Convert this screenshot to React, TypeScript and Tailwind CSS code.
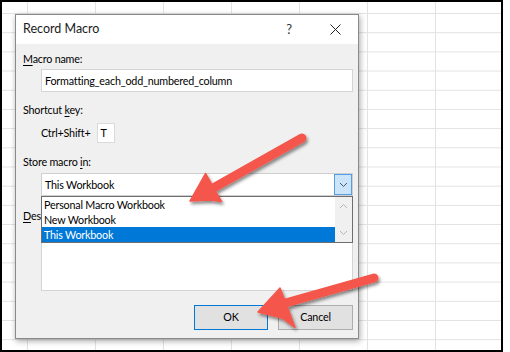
import React from "react";

const font = { fontFamily: 'Lato, "Noto Sans", "Liberation Sans", sans-serif' };

function Chevron({ up = false, color = "#4a5a70" }: { up?: boolean; color?: string }) {
  return (
    <svg width="9" height="6" viewBox="0 0 9 6">
      <path
        d={up ? "M1 5 L4.5 1.5 L8 5" : "M1 1 L4.5 4.5 L8 1"}
        fill="none"
        stroke={color}
        strokeWidth="1"
      />
    </svg>
  );
}

function Arrows() {
  return (
    <svg className="absolute left-0 top-0 z-20 pointer-events-none" width="510" height="352" viewBox="0 0 510 352">
      <defs>
        <filter id="sh" x="-20%" y="-20%" width="140%" height="140%">
          <feDropShadow dx="1.5" dy="2.5" stdDeviation="1.6" floodColor="#000" floodOpacity="0.45" />
        </filter>
      </defs>
      <g filter="url(#sh)">
        <line x1="302" y1="138" x2="208" y2="191" stroke="#f4574b" strokeWidth="9" strokeLinecap="round" />
        <path d="M190 201 L205.5 173.5 L211 183 L214 188.5 L221.5 201.5 L210 200 Z" fill="#f4574b" stroke="#f4574b" strokeWidth="1.5" strokeLinejoin="round" />
        <line x1="374" y1="278" x2="282" y2="304" stroke="#f4574b" strokeWidth="9" strokeLinecap="round" />
        <path d="M258 312 L280 288 L284 298 L287 306 L295 327.5 L282 318 Z" fill="#f4574b" stroke="#f4574b" strokeWidth="1.5" strokeLinejoin="round" />
      </g>
    </svg>
  );
}

export default function App() {
  return (
    <div className="relative w-[510px] h-[352px] bg-white overflow-hidden text-[10.75px] tracking-[-0.2px] text-black" style={font}>
      <div className="w-[503px] h-[352px] border-2 border-black bg-white bg-[linear-gradient(to_right,#e2e2e2_1px,transparent_1px),linear-gradient(to_bottom,#e2e2e2_1px,transparent_1px)] bg-[size:68px_19.2px] bg-[position:25px_11px]" />

      {/* Dialog window */}
      <div className="absolute left-[15px] top-[14px] w-[344px] h-[325px] border border-[#8a8a8a] shadow-[1px_2px_6px_rgba(0,0,0,0.35)] flex flex-col">
        <div className="h-[29px] bg-white flex items-center pl-[7px] text-[12.5px] tracking-normal text-[#1a1a1a]">
          <span>Record Macro</span>
          <span className="ml-auto mr-[38px] text-[13px] text-[#333]">?</span>
          <svg width="11" height="11" viewBox="0 0 11 11" className="mr-[17px]">
            <path d="M0.5 0.5 L10.5 10.5 M10.5 0.5 L0.5 10.5" stroke="#222" strokeWidth="1" />
          </svg>
        </div>
        <div className="flex-1 bg-[#f0f0f0] pl-[7px] pr-[5px] flex flex-col">
          <div className="mt-[7px] h-[16px] leading-[16px]">
            <span className="underline underline-offset-2">M</span>acro name:
          </div>
          <div className="mt-[2px] ml-[18px] h-[23px] bg-white border border-[#d4d4d4] flex items-center pl-[3px] leading-[16px]">
            Formatting_each_odd_numbered_column
          </div>
          <div className="mt-[10px] h-[16px] leading-[16px]">
            Shortcut <span className="underline underline-offset-2">k</span>ey:
          </div>
          <div className="mt-[5px] ml-[18px] flex items-center h-[20px]">
            <span className="leading-[16px]">Ctrl+Shift+</span>
            <div className="ml-[6px] w-[18px] h-[20px] bg-white border border-[#dadada] flex items-center pl-[3px] leading-[16px]">
              T
            </div>
          </div>
          <div className="mt-[11px] h-[16px] leading-[16px]">
            Store macro <span className="underline underline-offset-2">i</span>n:
          </div>
          <div className="relative mt-[3px] ml-[18px] z-10">
            <div className="h-[23px] bg-white border border-[#cfcfcf] flex items-center">
              <span className="pl-[3px] leading-[16px]">This Workbook</span>
              <div className="ml-auto w-[18px] h-[21px] bg-[#cce4f7] border border-[#569de5] flex items-center justify-center">
                <Chevron />
              </div>
            </div>
            <div className="absolute left-0 top-full w-full h-[47px] bg-white border border-[#6e6e6e] flex">
              <div className="flex-1 flex flex-col leading-[15px]">
                <div className="h-[15px] pl-[2px]">Personal Macro Workbook</div>
                <div className="h-[15px] pl-[2px]">New Workbook</div>
                <div className="h-[15px] pl-[2px] bg-[#0078d7] text-white">This Workbook</div>
              </div>
              <div className="w-[17px] bg-[#f0f0f0] flex flex-col items-center justify-between py-[6px]">
                <Chevron up color="#b5b5b5" />
                <Chevron color="#b5b5b5" />
              </div>
            </div>
          </div>
          <div className="mt-[12px] h-[16px] leading-[16px]">
            <span className="underline underline-offset-2">D</span>escription:
          </div>
          <div className="mt-[2px] ml-[18px] h-[65px] bg-white border border-[#d4d4d4]" />
          <div className="mt-[14px] flex justify-end gap-[10px]">
            <div className="w-[74px] h-[25px] bg-[#e1e1e1] border border-[#0078d7] flex items-center justify-center">
              OK
            </div>
            <div className="w-[75px] h-[25px] bg-[#e1e1e1] border border-[#adadad] flex items-center justify-center">
              Cancel
            </div>
          </div>
        </div>
      </div>

      <Arrows />
    </div>
  );
}
